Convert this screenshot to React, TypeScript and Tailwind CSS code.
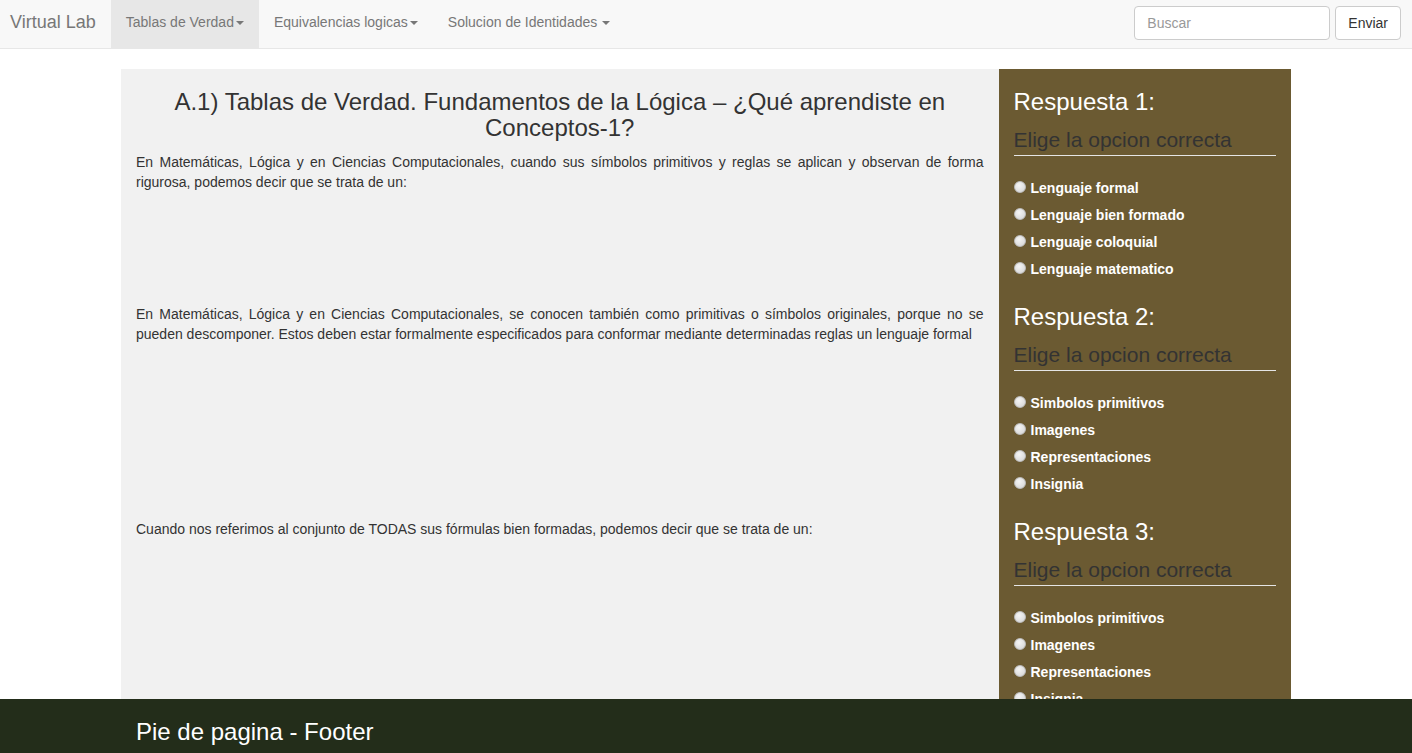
import { ReactNode } from "react";

const preguntas = [
    {
        texto: "En Matemáticas, Lógica y en Ciencias Computacionales, cuando sus símbolos primitivos y reglas se aplican y observan de forma rigurosa, podemos decir que se trata de un:",
        opciones: ["Lenguaje formal", "Lenguaje bien formado", "Lenguaje coloquial", "Lenguaje matematico"],
    },
    {
        texto: "En Matemáticas, Lógica y en Ciencias Computacionales, se conocen también como primitivas o símbolos originales, porque no se pueden descomponer. Estos deben estar formalmente especificados para conformar mediante determinadas reglas un lenguaje formal",
        opciones: ["Simbolos primitivos", "Imagenes", "Representaciones", "Insignia"],
    },
    {
        texto: "Cuando nos referimos al conjunto de TODAS sus fórmulas bien formadas, podemos decir que se trata de un:",
        opciones: ["Simbolos primitivos", "Imagenes", "Representaciones", "Insignia"],
    },
];

function Caret({ space }: { space?: boolean }) {
    return (
        <span
            className={`inline-block w-0 h-0 border-t-[4px] border-t-[#777] border-x-[4px] border-x-transparent align-middle ${space ? "ml-[5px]" : "ml-[2px]"}`}
        />
    );
}

function NavItem({ children, active }: { children: ReactNode; active?: boolean }) {
    return (
        <a className={`flex items-center px-[15px] pb-[3px] h-full text-[14px] text-[#777] ${active ? "bg-[#e7e7e7]" : ""}`}>
            {children}
        </a>
    );
}

function Navbar() {
    return (
        <nav className="flex items-start bg-[#f8f8f8] border-b border-[#e7e7e7] h-[49px] shrink-0">
            <div className="flex items-stretch h-[48px]">
                <a className="flex items-center pb-[3px] pl-[10px] pr-[15px] text-[18px] text-[#777]">Virtual Lab</a>
                <NavItem active>
                    Tablas de Verdad
                    <Caret />
                </NavItem>
                <NavItem>
                    Equivalencias logicas
                    <Caret />
                </NavItem>
                <NavItem>
                    Solucion de Identidades
                    <Caret space />
                </NavItem>
            </div>
            <form className="flex items-center gap-[5px] mt-[6px] ml-auto mr-[11px]">
                <input
                    placeholder="Buscar"
                    className="bg-white px-[12px] border border-[#ccc] rounded-[4px] w-[196px] h-[34px] text-[#555] placeholder:text-[#999] text-[14px]"
                />
                <button type="button" className="bg-white px-[12px] border border-[#ccc] rounded-[4px] h-[34px] text-[#333] text-[14px]">
                    Enviar
                </button>
            </form>
        </nav>
    );
}

function Opcion({ label }: { label: string }) {
    return (
        <label className="flex items-center h-[27px] font-bold text-[14px] text-white">
            <span className="inline-block relative -top-[2px] bg-[radial-gradient(circle_at_40%_35%,#f4f4f4,#d2d2d2)] mr-[5px] border border-[#bdbdbd] rounded-full w-[12px] h-[12px]" />
            {label}
        </label>
    );
}

export default function App() {
    return (
        <div className="flex flex-col bg-white h-screen overflow-hidden font-['Liberation_Sans',Arial,sans-serif] text-[#333]">
            <Navbar />
            <main className="flex-1 pt-[20px] overflow-hidden">
                <div className="mx-auto w-[1170px]">
                    {preguntas.map((p, i) => (
                        <div key={i} className="flex">
                            <div className="bg-[#f1f1f1] px-[15px] pt-[20px] w-3/4 h-[215px]">
                                {i === 0 && (
                                    <h3 className="mb-[10px] text-[24px] text-center leading-[26.4px]">
                                        A.1) Tablas de Verdad. Fundamentos de la Lógica – ¿Qué aprendiste en Conceptos-1?
                                    </h3>
                                )}
                                <p className="text-[14px] text-justify leading-[20px]">{p.texto}</p>
                            </div>
                            <div className="bg-[#6b5a32] px-[15px] pt-[20px] w-1/4 h-[215px]">
                                <h3 className="text-[24px] text-white leading-[26px]">Respuesta {i + 1}:</h3>
                                <div className="mt-[10px] mb-[19px] border-[#e5e5e5] border-b h-[31px] text-[#333] text-[21px] leading-[30px]">
                                    Elige la opcion correcta
                                </div>
                                {p.opciones.map((o) => (
                                    <Opcion key={o} label={o} />
                                ))}
                            </div>
                        </div>
                    ))}
                </div>
            </main>
            <footer className="bg-[#232d1a] h-[54px] shrink-0">
                <div className="mx-auto px-[15px] pt-[20px] w-[1170px] text-[24px] text-white leading-[26px]">
                    Pie de pagina - Footer
                </div>
            </footer>
        </div>
    );
}
